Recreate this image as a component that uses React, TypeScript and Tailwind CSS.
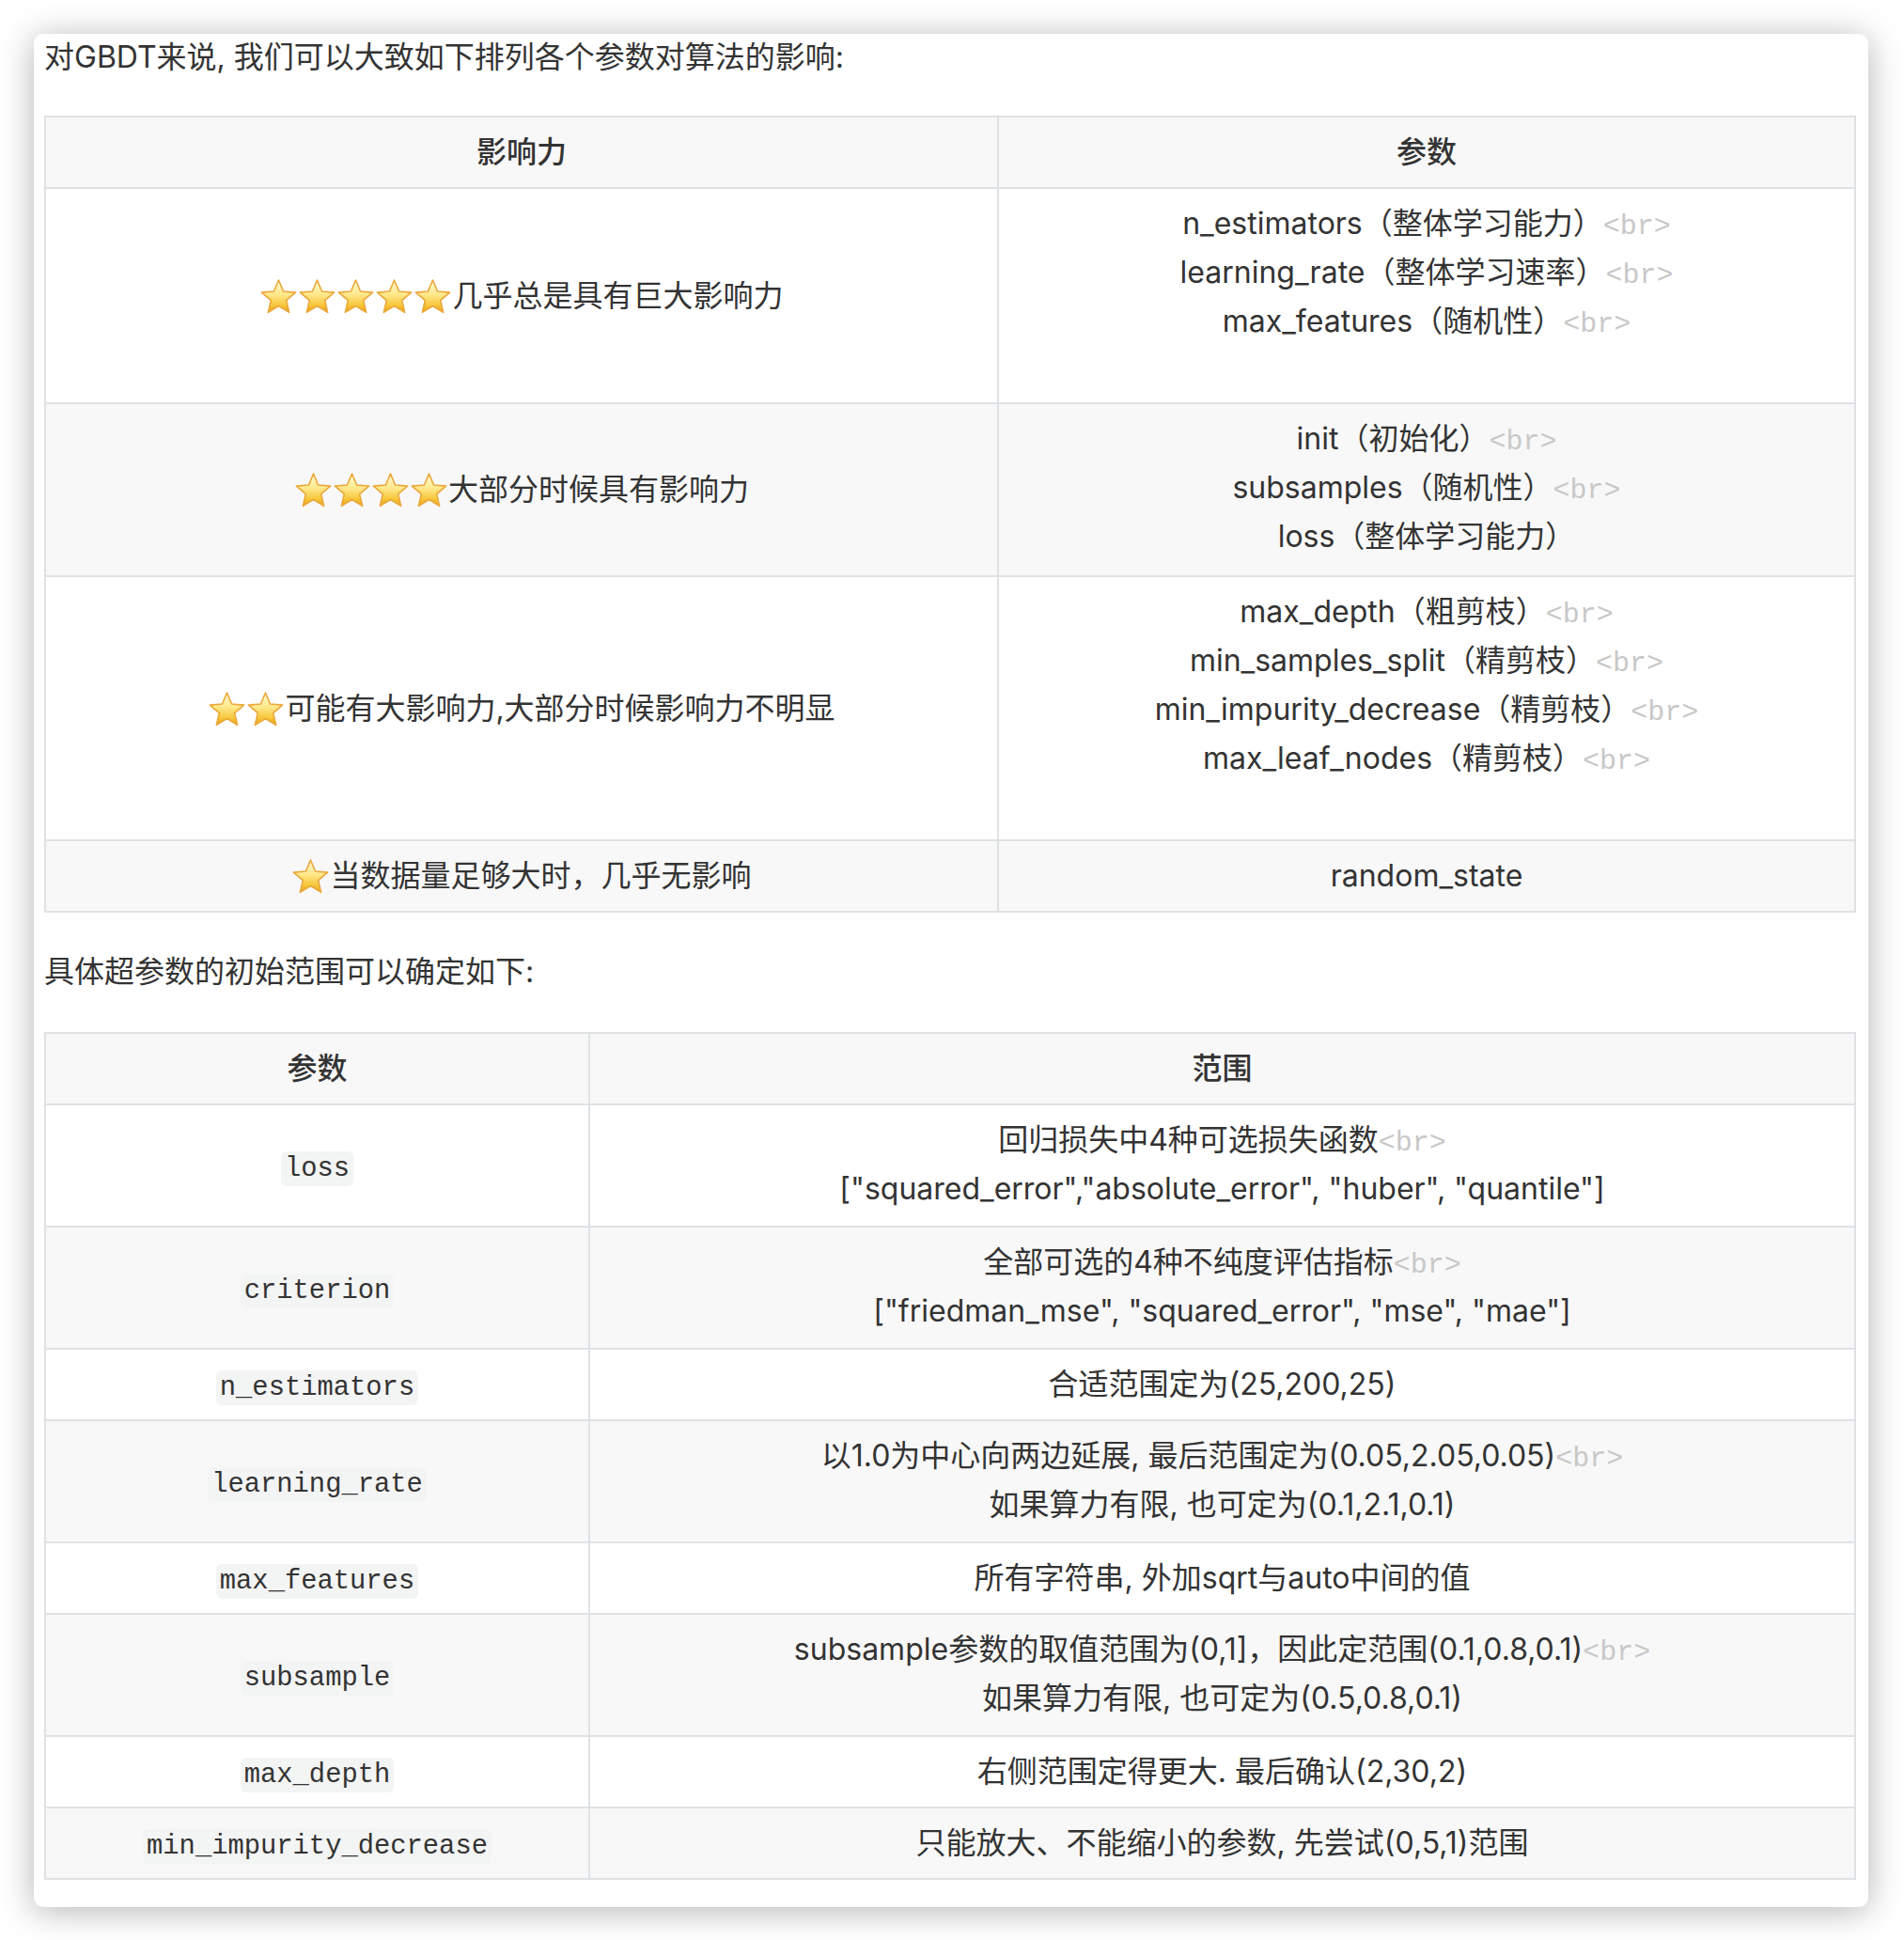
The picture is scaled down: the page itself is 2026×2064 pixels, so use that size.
import React from "react";

const Star = () => (
  <svg width="41" height="38" viewBox="-0.5 0 41 38" className="shrink-0">
    <defs>
      <linearGradient id="starg" x1="0" y1="0" x2="0" y2="1">
        <stop offset="0" stopColor="#fffbd8" />
        <stop offset="0.45" stopColor="#ffe88a" />
        <stop offset="0.78" stopColor="#f8c63a" />
        <stop offset="1" stopColor="#e6a01e" />
      </linearGradient>
    </defs>
    <polygon
      points="20,2 25.06,14.04 38.07,15.13 28.18,23.66 31.17,36.37 20,29.6 8.83,36.37 11.82,23.66 1.93,15.13 14.94,14.04"
      fill="url(#starg)"
      stroke="#eba73a"
      strokeWidth="1.6"
      strokeLinejoin="round"
    />
  </svg>
);

const Br = () => (
  <span className="font-['Liberation_Mono',monospace] text-[30px] leading-none text-[#c8c8c8]">&lt;br&gt;</span>
);

const Code = ({ children }: { children: React.ReactNode }) => (
  <code className="font-['Liberation_Mono',monospace] text-[28.8px] leading-none bg-[#f3f4f4] rounded-[6px] px-[4px] py-[2px] text-[#333]">
    {children}
  </code>
);

const cell =
  "border-2 border-[#dfe2e5] px-[26px] py-[11px] text-center align-middle leading-[52px] font-normal";
const headCell =
  "border-2 border-[#dfe2e5] px-[26px] py-[11px] text-center align-middle leading-[52px] font-medium";

const Stars = ({ n, text }: { n: number; text: string }) => (
  <div className="flex items-center justify-center h-[52px]">
    {Array.from({ length: n }).map((_, i) => (
      <Star key={i} />
    ))}
    <span>{text}</span>
  </div>
);

const Line = ({ children }: { children?: React.ReactNode }) => (
  <div className="h-[52px]">{children}</div>
);

export default function App() {
  const t1: { stars: number; text: string; right: React.ReactNode[]; tail: string; bg: string }[] = [
    {
      stars: 5,
      text: "几乎总是具有巨大影响力",
      right: [
        <>n_estimators（整体学习能力）<Br /></>,
        <>learning_rate（整体学习速率）<Br /></>,
        <>max_features（随机性）<Br /></>,
      ],
      tail: "h-[49px]",
      bg: "bg-white",
    },
    {
      stars: 4,
      text: "大部分时候具有影响力",
      right: [
        <>init（初始化）<Br /></>,
        <>subsamples（随机性）<Br /></>,
        <>loss（整体学习能力）</>,
      ],
      tail: "h-[4px]",
      bg: "bg-[#f8f8f8]",
    },
    {
      stars: 2,
      text: "可能有大影响力,大部分时候影响力不明显",
      right: [
        <>max_depth（粗剪枝）<Br /></>,
        <>min_samples_split（精剪枝）<Br /></>,
        <>min_impurity_decrease（精剪枝）<Br /></>,
        <>max_leaf_nodes（精剪枝）<Br /></>,
      ],
      tail: "h-[49px]",
      bg: "bg-white",
    },
    {
      stars: 1,
      text: "当数据量足够大时，几乎无影响",
      right: [<>random_state</>],
      tail: "h-0",
      bg: "bg-[#f8f8f8]",
    },
  ];

  const t2: { name: string; lines: React.ReactNode[] }[] = [
    {
      name: "loss",
      lines: [
        <>回归损失中4种可选损失函数<Br /></>,
        <>["squared_error","absolute_error", "huber", "quantile"]</>,
      ],
    },
    {
      name: "criterion",
      lines: [
        <>全部可选的4种不纯度评估指标<Br /></>,
        <>["friedman_mse", "squared_error", "mse", "mae"]</>,
      ],
    },
    { name: "n_estimators", lines: [<>合适范围定为(25,200,25)</>] },
    {
      name: "learning_rate",
      lines: [
        <>以1.0为中心向两边延展, 最后范围定为(0.05,2.05,0.05)<Br /></>,
        <>如果算力有限, 也可定为(0.1,2.1,0.1)</>,
      ],
    },
    { name: "max_features", lines: [<>所有字符串, 外加sqrt与auto中间的值</>] },
    {
      name: "subsample",
      lines: [
        <>subsample参数的取值范围为(0,1]，因此定范围(0.1,0.8,0.1)<Br /></>,
        <>如果算力有限, 也可定为(0.5,0.8,0.1)</>,
      ],
    },
    { name: "max_depth", lines: [<>右侧范围定得更大. 最后确认(2,30,2)</>] },
    { name: "min_impurity_decrease", lines: [<>只能放大、不能缩小的参数, 先尝试(0,5,1)范围</>] },
  ];

  return (
    <div className="w-[2026px] min-h-[2064px] bg-white pt-[36px] pl-[36px] font-['Inter','Noto_Sans_CJK_SC',sans-serif] text-[32px] text-[#333]">
      <div className="w-[1952px] bg-white rounded-[10px] shadow-[0_4px_36px_rgba(0,0,0,0.3)] pl-[11px] pr-[15px] pb-[29px]">
        <p className="leading-[50px]">对GBDT来说, 我们可以大致如下排列各个参数对算法的影响:</p>

        <table className="mt-[37px] w-[1926px] table-fixed border-collapse">
          <colgroup>
            <col className="w-[1014px]" />
            <col className="w-[912px]" />
          </colgroup>
          <thead>
            <tr className="bg-[#f8f8f8]">
              <th className={headCell}>影响力</th>
              <th className={headCell}>参数</th>
            </tr>
          </thead>
          <tbody>
            {t1.map((r, i) => (
              <tr key={i} className={r.bg}>
                <td className={cell}>
                  <Stars n={r.stars} text={r.text} />
                </td>
                <td className={cell}>
                  {r.right.map((l, j) => (
                    <Line key={j}>{l}</Line>
                  ))}
                  <div className={r.tail} />
                </td>
              </tr>
            ))}
          </tbody>
        </table>

        <p className="mt-[37px] leading-[51px]">具体超参数的初始范围可以确定如下:</p>

        <table className="mt-[39px] w-[1926px] table-fixed border-collapse">
          <colgroup>
            <col className="w-[579px]" />
            <col className="w-[1347px]" />
          </colgroup>
          <thead>
            <tr className="bg-[#f8f8f8]">
              <th className={headCell}>参数</th>
              <th className={headCell}>范围</th>
            </tr>
          </thead>
          <tbody>
            {t2.map((r, i) => (
              <tr key={i} className={i % 2 === 0 ? "bg-white" : "bg-[#f8f8f8]"}>
                <td className={cell}>
                  <Code>{r.name}</Code>
                </td>
                <td className={cell}>
                  {r.lines.map((l, j) => (
                    <Line key={j}>{l}</Line>
                  ))}
                  {r.lines.length > 1 && <div className="h-[2px]" />}
                </td>
              </tr>
            ))}
          </tbody>
        </table>
      </div>
    </div>
  );
}
